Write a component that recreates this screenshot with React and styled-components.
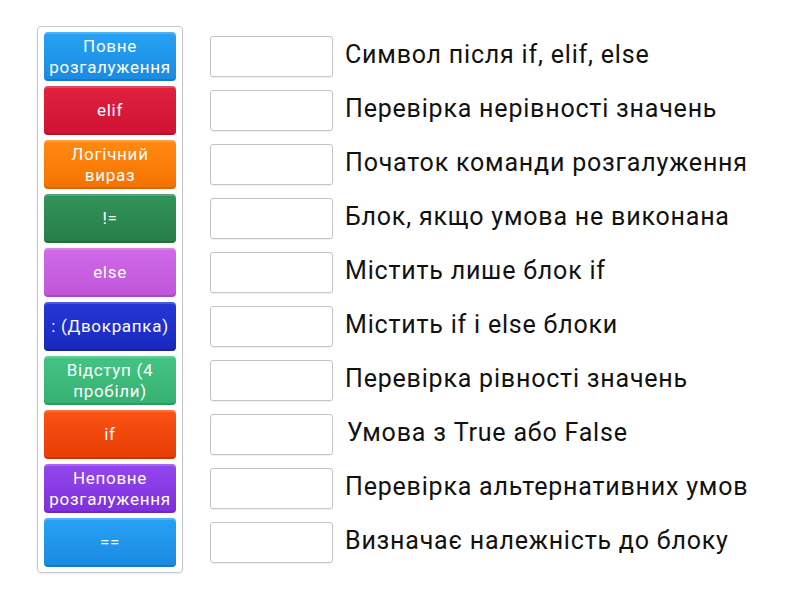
import React from "react";
import styled, { createGlobalStyle } from "styled-components";

const Global = createGlobalStyle`
  body {
    margin: 0;
    background: #fff;
    font-family: Roboto, "Noto Sans", sans-serif;
  }
`;

const Page = styled.div`
  width: 800px;
  height: 600px;
  display: flex;
  align-items: flex-start;
  padding: 26px 0 0 37px;
  box-sizing: border-box;
`;

const Tray = styled.div`
  width: 146px;
  box-sizing: border-box;
  border: 1px solid #c8c8c8;
  border-radius: 4px;
  padding: 5px 6px 5px 6px;
  display: flex;
  flex-direction: column;
  gap: 5px;
  box-shadow: 0 1px 2px rgba(0, 0, 0, 0.08);
`;

const Tile = styled.div`
  height: 49px;
  border-radius: 4px;
  background: linear-gradient(${({ top }) => top}, ${({ bottom }) => bottom});
  box-shadow: inset 0 2px 0 rgba(255, 255, 255, 0.18), inset 0 -2px 0 rgba(0, 0, 0, 0.12);
  color: #fff;
  font-size: 17px;
  letter-spacing: 0.7px;
  line-height: 21px;
  display: flex;
  align-items: center;
  justify-content: center;
  text-align: center;
  padding: 0 2px;
`;

const Targets = styled.div`
  margin-left: 27px;
  padding-top: 10px;
  display: flex;
  flex-direction: column;
  gap: 13px;
`;

const Row = styled.div`
  display: flex;
  align-items: center;
  height: 41px;
`;

const Slot = styled.div`
  width: 123px;
  height: 41px;
  box-sizing: border-box;
  border: 1px solid #c4c4c4;
  border-radius: 3px;
  box-shadow: 0 1px 1px rgba(0, 0, 0, 0.06);
`;

const Label = styled.div`
  margin-left: ${({ shift }) => 12 + (shift || 0)}px;
  margin-bottom: 5px;
  font-size: 25px;
  letter-spacing: 0.8px;
  color: #111;
  white-space: nowrap;
`;

const tiles = [
  { text: "Повне розгалуження", top: "#27a2f5", bottom: "#1a8ae0" },
  { text: "elif", top: "#e0223f", bottom: "#cf1233" },
  { text: "Логічний вираз", top: "#ff8a12", bottom: "#f57200" },
  { text: "!=", top: "#31955a", bottom: "#267e48" },
  { text: "else", top: "#d06ae6", bottom: "#bf55da" },
  { text: ": (Двокрапка)", top: "#2537d6", bottom: "#1a28bf" },
  { text: "Відступ (4 пробіли)", top: "#44c484", bottom: "#35b071" },
  { text: "if", top: "#fb5214", bottom: "#e63d06" },
  { text: "Неповне розгалуження", top: "#9446ee", bottom: "#7d30da" },
  { text: "==", top: "#27a2f5", bottom: "#1a8ae0" },
];

const labels = [
  "Символ після if, elif, else",
  "Перевірка нерівності значень",
  "Початок команди розгалуження",
  "Блок, якщо умова не виконана",
  "Містить лише блок if",
  "Містить if і else блоки",
  "Перевірка рівності значень",
  "Умова з True або False",
  "Перевірка альтернативних умов",
  "Визначає належність до блоку",
];

export default function App() {
  return (
    <Page>
      <Global />
      <Tray>
        {tiles.map((t) => (
          <Tile key={t.text} top={t.top} bottom={t.bottom}>
            {t.text}
          </Tile>
        ))}
      </Tray>
      <Targets>
        {labels.map((l, i) => (
          <Row key={l}>
            <Slot />
            <Label shift={i === 7 ? 2 : 0}>{l}</Label>
          </Row>
        ))}
      </Targets>
    </Page>
  );
}
